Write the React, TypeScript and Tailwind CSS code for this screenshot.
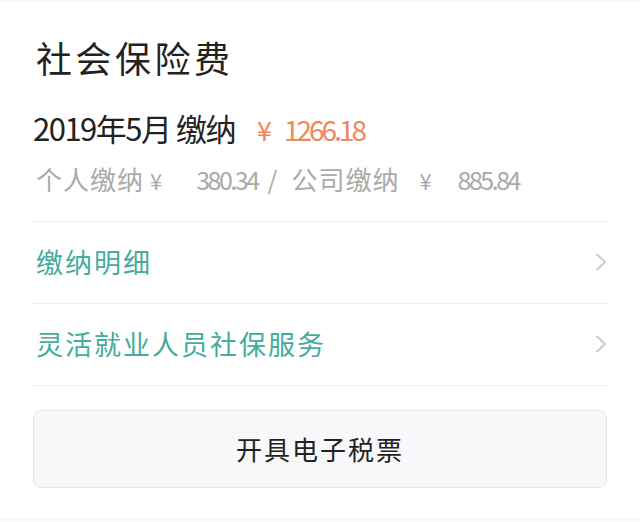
const font = { fontFamily: '"Noto Sans CJK SC", "Noto Sans", sans-serif' }

function Chevron() {
  return (
    <svg width="12" height="18" viewBox="0 0 12 18" fill="none" className="shrink-0">
      <polyline points="2,1.5 10,9 2,16.5" stroke="#c9c9c9" strokeWidth="1.8" strokeLinecap="round" strokeLinejoin="round" />
    </svg>
  )
}

function LinkRow({ label }: { label: string }) {
  return (
    <div className="flex h-[82px] items-center justify-between border-b border-[#ececec] pl-[3px]">
      <span className="text-[27px] tracking-[2px] text-[#45ab9c]">{label}</span>
      <Chevron />
    </div>
  )
}

export default function App() {
  return (
    <div className="h-[522px] w-[640px] bg-[#fafafa] pt-[2px] pb-[4px]" style={font}>
      <div className="h-full bg-white px-[33px]">
        {/* 标题 */}
        <h1 className="pt-[27px] pl-[3px] text-[36px] leading-[56px] tracking-[3.5px] text-[#222]">
          社会保险费
        </h1>

        {/* 本月缴纳 */}
        <div className="mt-[21px] flex items-baseline">
          <span className="text-[31px] leading-[44px] tracking-[-1.5px] text-[#222]">2019年5月 缴纳</span>
          <span className="ml-[22px] text-[27px] text-[#f0875a]">¥</span>
          <span className="ml-[12px] text-[28px] tracking-[-3px] text-[#f0875a]">1266.18</span>
        </div>
        <div className="mt-[9px] flex items-baseline pl-[3px] pb-[22px] text-[25px] leading-[38px] text-[#aaaaaa]">
          <span className="text-[26px] tracking-[1px]">个人缴纳</span>
          <span className="ml-[6px] text-[22px]">¥</span>
          <span className="ml-[34px] tracking-[-2.5px]">380.34</span>
          <span className="ml-[10px]">/</span>
          <span className="ml-[14px] text-[26px] tracking-[1px]">公司缴纳</span>
          <span className="ml-[20px] text-[22px]">¥</span>
          <span className="ml-[26px] tracking-[-2.5px]">885.84</span>
        </div>

        <div className="border-t border-[#ececec]">
          <LinkRow label="缴纳明细" />
          <LinkRow label="灵活就业人员社保服务" />
        </div>

        {/* 开票 */}
        <button className="mt-[24px] flex h-[78px] w-full items-center justify-center rounded-[8px] border border-[#e6e6e6] bg-[#f8f8fa] text-[26px] tracking-[2px] text-[#222]">
          开具电子税票
        </button>
      </div>
    </div>
  )
}
